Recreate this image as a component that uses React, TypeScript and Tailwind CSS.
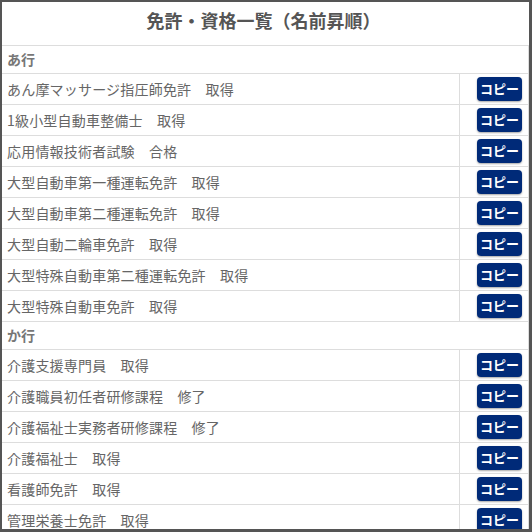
import React from "react";

const groups: { head: string; items: string[] }[] = [
  {
    head: "あ行",
    items: [
      "あん摩マッサージ指圧師免許　取得",
      "1級小型自動車整備士　取得",
      "応用情報技術者試験　合格",
      "大型自動車第一種運転免許　取得",
      "大型自動車第二種運転免許　取得",
      "大型自動二輪車免許　取得",
      "大型特殊自動車第二種運転免許　取得",
      "大型特殊自動車免許　取得",
    ],
  },
  {
    head: "か行",
    items: [
      "介護支援専門員　取得",
      "介護職員初任者研修課程　修了",
      "介護福祉士実務者研修課程　修了",
      "介護福祉士　取得",
      "看護師免許　取得",
      "管理栄養士免許　取得",
      "危険物取扱者（甲種）　取得",
    ],
  },
];

export default function App() {
  return (
    <div
      className="w-[532px] h-[532px] overflow-hidden bg-white border-[#555] border-l-2 border-t-2 border-r-[3px] border-b-[3px] text-[#666]"
      style={{ fontFamily: '"Noto Sans CJK JP", "Noto Sans", sans-serif' }}
    >
      <div className="h-[44px] flex items-center justify-center pb-[6px] border-b border-[#ddd] text-[18px] font-bold text-[#555] pr-[4px]">
        免許・資格一覧（名前昇順）
      </div>
      {groups.map((g) => (
        <div key={g.head}>
          <div className="h-[28px] flex items-center pl-[5px] border-b border-[#ddd] text-[14px] font-bold text-[#777] border-r border-r-[#ddd]">
            {g.head}
          </div>
          {g.items.map((it) => (
            <div key={it} className="h-[31px] flex border-b border-[#ddd] border-r border-r-[#ddd]">
              <div className="flex-1 flex items-center pl-[5px] text-[14px] tracking-[0.2px] text-[#666]">{it}</div>
              <div className="w-[69px] flex items-center justify-end pr-[6px] border-l border-[#ddd]">
                <button className="h-[24px] w-[45px] rounded-[4px] bg-[#002a78] text-white text-[13px] font-bold shadow-[0_1px_2px_rgba(0,0,0,0.35)] flex items-center justify-center">
                  コピー
                </button>
              </div>
            </div>
          ))}
        </div>
      ))}
    </div>
  );
}
